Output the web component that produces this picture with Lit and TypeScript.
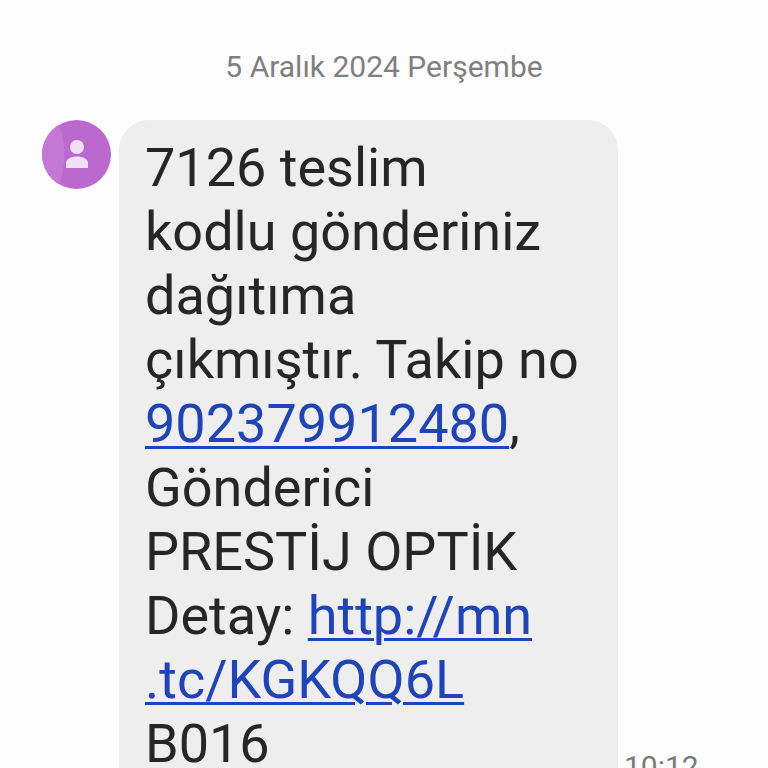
import { LitElement, html, css } from "lit";
import { customElement } from "lit/decorators.js";

@customElement("app-root")
export class AppRoot extends LitElement {
  static styles = css`
    :host { display: block; width: 768px; height: 768px; overflow: hidden; background: #fdfdfd; font-family: Roboto, "Noto Sans", sans-serif; }
    .date { height: 120px; box-sizing: border-box; padding-top: 49px; text-align: center; font-size: 30px; line-height: 36px; color: #808080; }
    .row { display: flex; align-items: flex-start; padding-left: 42px; }
    .avatar { width: 69px; height: 69px; margin-right: 8px; flex: none; }
    .bubble { width: 499px; box-sizing: border-box; background: #eeeeef; border-radius: 30px; padding: 16px 20px 20px 26px; font-size: 54px; line-height: 64px; color: #262626; }
    .bubble div { white-space: nowrap; }
    a { color: #1f45b5; text-decoration: underline; text-decoration-thickness: 3px; text-underline-offset: 4px; }
    .time { font-size: 30px; line-height: 30px; color: #7a7a7a; margin: 632px 0 0 6px; white-space: nowrap; }
  `;
  render() {
    return html`
      <div class="date">5 Aralık 2024 Perşembe</div>
      <div class="row">
        <svg class="avatar" viewBox="0 0 69 69">
          <circle cx="34.5" cy="34.5" r="34.5" fill="#bb68cf" />
          <path d="M17 4.8A34.5 34.5 0 0 0 17 64.2C24 48 24 20 17 4.8z" fill="#c478d6" />
          <circle cx="35" cy="27" r="7" fill="#f3dff8" />
          <path d="M24 48v-5c0-4 5-6.500 11-6.500s11 2.500 11 6.500v5z" fill="#f3dff8" />
        </svg>
        <div class="bubble">
          <div>7126 teslim</div>
          <div>kodlu gönderiniz</div>
          <div>dağıtıma</div>
          <div>çıkmıştır. Takip no</div>
          <div><a>902379912480</a>,</div>
          <div>Gönderici</div>
          <div>PRESTİJ OPTİK</div>
          <div>Detay: <a>http://mn</a></div>
          <div><a>.tc/KGKQQ6L</a></div>
          <div>B016</div>
        </div>
        <div class="time">10:12</div>
      </div>
    `;
  }
}
